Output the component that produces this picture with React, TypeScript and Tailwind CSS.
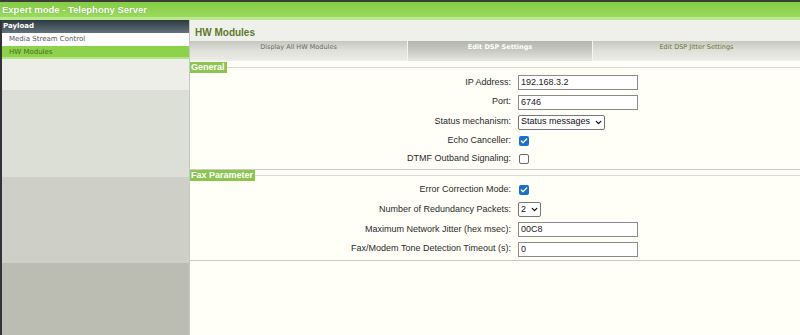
import { Check, ChevronDown } from "lucide-react";

const sans = "font-['Liberation_Sans',Arial,sans-serif]";
const verdana = "font-['DejaVu_Sans',Verdana,sans-serif]";

type Row = { label: string; kind: "text" | "select" | "check"; value?: string; checked?: boolean; w?: string };

const general: Row[] = [
  { label: "IP Address:", kind: "text", value: "192.168.3.2" },
  { label: "Port:", kind: "text", value: "6746" },
  { label: "Status mechanism:", kind: "select", value: "Status messages", w: "w-[87px]" },
  { label: "Echo Canceller:", kind: "check", checked: true },
  { label: "DTMF Outband Signaling:", kind: "check", checked: false },
];

const fax: Row[] = [
  { label: "Error Correction Mode:", kind: "check", checked: true },
  { label: "Number of Redundancy Packets:", kind: "select", value: "2", w: "w-[23px]" },
  { label: "Maximum Network Jitter (hex msec):", kind: "text", value: "00C8" },
  { label: "Fax/Modem Tone Detection Timeout (s):", kind: "text", value: "0" },
];

const Control = ({ row }: { row: Row }) => {
  if (row.kind === "text")
    return (
      <div className="w-[120px] h-[15px] border border-[#8a8a8a] bg-white px-[2px] text-[9px] leading-[13px] text-[#222]">
        {row.value}
      </div>
    );
  if (row.kind === "select")
    return (
      <div className={`${row.w} h-[15px] border border-[#767676] rounded-[2px] bg-white pl-[2px] pr-[1px] flex items-center justify-between text-[9px] text-[#111]`}>
        <span>{row.value}</span>
        <ChevronDown className="w-[9px] h-[9px]" strokeWidth={3.5} />
      </div>
    );
  return row.checked ? (
    <div className="ml-[1px] w-[10px] h-[10px] rounded-[2px] bg-[#1a6fd6] flex items-center justify-center">
      <Check className="w-[8px] h-[8px] text-white" strokeWidth={4} />
    </div>
  ) : (
    <div className="ml-[1px] w-[10px] h-[10px] rounded-[2px] border border-[#6b6b6b] bg-white" />
  );
};

const Fieldset = ({ legend, rows, heights, top }: { legend: string; rows: Row[]; heights: string[]; top: string }) => (
  <div className={`border-b border-[#c9cbc4] pb-[1px] ${top}`}>
    <div className="flex items-center h-[11px]">
      <div className="h-[11px] bg-[#8cc54f] text-white font-bold text-[9px] leading-[11px] pl-[1px] pr-[2px] whitespace-nowrap">{legend}</div>
      <div className="flex-1 border-t border-[#dcddd8]" />
    </div>
    {rows.map((row, i) => (
      <div key={row.label} className={`grid grid-cols-[321px_1fr] gap-x-[7px] items-center ${heights[i]}`}>
        <div className="text-right text-[9px] text-[#2a2a2a]">{row.label}</div>
        <Control row={row} />
      </div>
    ))}
  </div>
);

const App = () => {
  return (
    <div className={`w-[800px] h-[335px] overflow-hidden bg-[#fffff8] ${sans}`}>
      {/* top bar */}
      <div className="h-[20px] border-t-2 border-[#3c3c3c] bg-gradient-to-b from-[#84cd44] to-[#9ad95c] border-b-[3px] border-b-[#b9e88e]">
        <div className="pl-[2px] text-white font-bold text-[9.5px] leading-[15px] [text-shadow:0_0_1px_#6a9e30]">
          Expert mode - Telephony Server
        </div>
      </div>
      <div className="flex h-[315px]">
        {/* sidebar */}
        <div className="w-[190px] border-l-2 border-[#333] border-r border-r-[#c5c7c0] flex flex-col">
          <div className={`${verdana} h-[13px] bg-gradient-to-b from-[#2d3a40] to-[#63737c] text-white font-bold text-[7px] leading-[13px] pl-[1px]`}>Payload</div>
          <div className={`${verdana} h-[13px] bg-white text-[#555] text-[7px] leading-[13px] pl-[7px]`}>Media Stream Control</div>
          <div className={`${verdana} h-[13px] bg-[#8cd24a] border-b-2 border-[#b3e386] text-[#4e6a22] text-[7px] leading-[12px] pl-[7px]`}>HW Modules</div>
          <div className="h-[31px] bg-[#eceee7]" />
          <div className="h-[87px] bg-[#dcdfd6]" />
          <div className="h-[86px] bg-[#ced0c7]" />
          <div className="flex-1 bg-[#bbbdb3]" />
        </div>
        {/* content */}
        <div className="flex-1 flex flex-col">
          <div className="h-[21px] bg-[#eff0ea] pl-[5px] flex items-end">
            <div className="text-[#5b7a2c] font-bold text-[10px] leading-[16px]">HW Modules</div>
          </div>
          <div className={`${verdana} h-[20px] flex text-[6.5px] bg-[#e9eae3]`}>
            <div className="w-[217px] bg-gradient-to-b from-[#c6c8c0] via-[#dfe0d9] to-[#eaebe4] border-b border-[#f3f3ee] text-center leading-[12px] text-[#6c6c5c]">Display All HW Modules</div>
            <div className="w-[186px] bg-gradient-to-b from-[#b3b6ac] via-[#c9cbc2] to-[#e6e7e0] border-x border-[#f5f5f0] text-center leading-[12px] text-white font-bold">Edit DSP Settings</div>
            <div className="flex-1 bg-gradient-to-b from-[#c6c8c0] via-[#dfe0d9] to-[#eaebe4] border-b border-[#f3f3ee] text-center leading-[12px] text-[#66782f]">Edit DSP Jitter Settings</div>
          </div>
          <div>
            <Fieldset legend="General" top="pt-[1px]" rows={general} heights={["h-[19px]", "h-[20px]", "h-[20px]", "h-[18px]", "h-[18px]"]} />
            <Fieldset legend="Fax Parameter" top="" rows={fax} heights={["h-[18px]", "h-[21px]", "h-[19px]", "h-[20px]"]} />
          </div>
        </div>
      </div>
    </div>
  );
};

export default App;
